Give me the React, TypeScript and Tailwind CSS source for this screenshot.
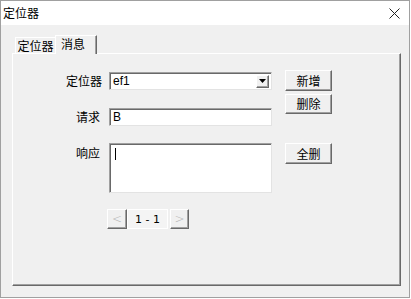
const font = { fontFamily: '"Noto Sans CJK SC", "Liberation Sans", sans-serif' };

function RaisedButton({
  children,
  className = "",
  tone = "text-black",
}: {
  children?: React.ReactNode;
  className?: string;
  tone?: string;
}) {
  return (
    <div
      className={`flex items-center justify-center bg-[#f0f0f0] border border-t-white border-l-white border-r-[#696969] border-b-[#696969] shadow-[inset_-1px_-1px_0_#a0a0a0] text-[12px] ${tone} ${className}`}
    >
      {children}
    </div>
  );
}

function Sunken({ children, className = "" }: { children?: React.ReactNode; className?: string }) {
  return (
    <div
      className={`bg-white border border-t-[#a0a0a0] border-l-[#a0a0a0] border-r-[#e3e3e3] border-b-[#e3e3e3] shadow-[inset_1px_1px_0_#696969] ${className}`}
    >
      {children}
    </div>
  );
}

export default function App() {
  return (
    <div className="w-[411px] h-[299px] bg-white" style={font}>
      <div className="w-[410px] h-[298px] border border-[#a0a0a0] bg-[#f0f0f0] flex flex-col">
        {/* Title bar */}
        <div className="h-[24px] bg-white flex items-center justify-between pl-[2px] pr-[9px] shrink-0">
          <span className="text-[12px] text-black leading-none">定位器</span>
          <svg width="11" height="11" viewBox="0 0 11 11">
            <path d="M0.5 0.5 L10.5 10.5 M10.5 0.5 L0.5 10.5" stroke="#222" strokeWidth="1" />
          </svg>
        </div>

        {/* Tabs + panel */}
        <div className="pl-[11px] pt-[10px] flex flex-col">
          <div className="flex items-end h-[18px] pl-[3px]">
            <div className="w-[40px] h-[16px] border-l border-t border-white flex items-center justify-center text-[12px] text-black leading-none">
              定位器
            </div>
            <div className="w-[42px] h-[19px] -mb-[1px] relative z-10 bg-[#f0f0f0] border-l border-t border-white border-r border-r-[#696969] shadow-[inset_-1px_0_0_#a0a0a0] flex items-start justify-center pt-[2px] pr-[6px] text-[12px] text-black leading-none">
              消息
            </div>
          </div>
          <div className="w-[389px] h-[233px] border border-t-white border-l-white border-r-[#696969] border-b-[#696969] shadow-[inset_-1px_-1px_0_#a0a0a0] flex">
            {/* left column */}
            <div className="flex flex-col pt-[18px]">
              <div className="flex items-center h-[18px]">
                <div className="w-[89px] text-right text-[12px] text-black leading-none">定位器</div>
                <Sunken className="ml-[7px] w-[163px] h-[18px] flex items-center justify-between pl-[3px] pr-[2px]">
                  <span className="text-[12px] text-black leading-none" style={{ fontFamily: '"Liberation Sans", sans-serif' }}>
                    ef1
                  </span>
                  <RaisedButton className="w-[13px] h-[13px]">
                    <svg width="7" height="4" viewBox="0 0 7 4">
                      <path d="M0 0 H7 L3.5 4 Z" fill="#000" />
                    </svg>
                  </RaisedButton>
                </Sunken>
              </div>
              <div className="flex items-center h-[18px] mt-[18px]">
                <div className="w-[87px] text-right text-[12px] text-black leading-none">请求</div>
                <Sunken className="ml-[9px] w-[163px] h-[18px] flex items-center pl-[3px]">
                  <span className="text-[12px] text-black leading-none" style={{ fontFamily: '"Liberation Sans", sans-serif' }}>
                    B
                  </span>
                </Sunken>
              </div>
              <div className="flex items-start h-[50px] mt-[17px]">
                <div className="w-[87px] text-right text-[12px] text-black leading-none pt-[4px]">响应</div>
                <Sunken className="ml-[9px] w-[163px] h-[50px] pl-[5px] pt-[4px]">
                  <div className="w-[1px] h-[12px] bg-black" />
                </Sunken>
              </div>
              <div className="flex items-center h-[20px] mt-[16px] ml-[94px]">
                <RaisedButton className="w-[20px] h-[20px]" tone="text-[#b4b4b4]">
                  <span style={{ fontFamily: '"DejaVu Sans", sans-serif' }} className="text-[12px] leading-none font-light">&lt;</span>
                </RaisedButton>
                <div className="w-[41px] h-[20px] bg-[#f4f4f4] border border-white flex items-center justify-center text-[11px] text-black leading-none" style={{ fontFamily: '"DejaVu Sans", sans-serif' }}>
                  1 - 1
                </div>
                <RaisedButton className="ml-[2px] w-[19px] h-[20px]" tone="text-[#b4b4b4]">
                  <span style={{ fontFamily: '"DejaVu Sans", sans-serif' }} className="text-[12px] leading-none font-light">&gt;</span>
                </RaisedButton>
              </div>
            </div>
            {/* right column */}
            <div className="flex flex-col pt-[16px] ml-[13px]">
              <RaisedButton className="w-[47px] h-[21px]">新增</RaisedButton>
              <RaisedButton className="w-[47px] h-[20px] mt-[3px]">删除</RaisedButton>
              <RaisedButton className="w-[47px] h-[21px] mt-[29px]">全删</RaisedButton>
            </div>
          </div>
        </div>
      </div>
    </div>
  );
}
